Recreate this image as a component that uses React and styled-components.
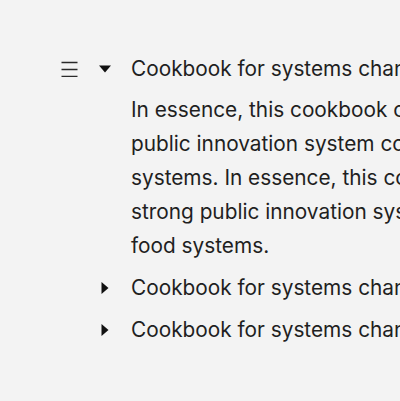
import React, { useState } from "react";
import styled, { createGlobalStyle } from "styled-components";

const GlobalStyle = createGlobalStyle`
  html, body {
    margin: 0;
    background: #f3f3f3;
    overflow: hidden;
  }
  body {
    font-family: "Inter", "Liberation Sans", sans-serif;
    color: #1f1f1f;
  }
`;

const Page = styled.div`
  display: flex;
  align-items: flex-start;
  gap: 15px;
  padding: 48px 0 0 60px;
  width: 900px;
`;

const Handle = styled.button`
  display: flex;
  align-items: center;
  justify-content: center;
  width: 18px;
  height: 42px;
  padding: 0;
  border: none;
  background: none;
  color: #2a2a2a;
  cursor: grab;
`;

const List = styled.div`
  display: flex;
  flex-direction: column;
  flex: 1;
`;

const Item = styled.div`
  display: flex;
  flex-direction: column;
`;

const Header = styled.button`
  display: flex;
  align-items: center;
  gap: 14px;
  padding: 4px 0;
  border: none;
  background: none;
  font: inherit;
  color: inherit;
  text-align: left;
  cursor: pointer;
`;

const Caret = styled.span`
  display: flex;
  align-items: center;
  justify-content: center;
  width: 24px;
  height: 34px;
  color: #111;
`;

const Title = styled.span`
  font-size: 20.8px;
  line-height: 34px;
  white-space: nowrap;
`;

const Body = styled.p`
  margin: 0;
  padding: 3px 0 4px 38px;
  width: 560px;
  font-size: 20.8px;
  line-height: 34px;
`;

const MenuIcon = () => (
  <svg width="17" height="16" viewBox="0 0 17 16">
    <path d="M0.5 1.5h16M0.5 8.5h16M0.5 15.5h16" stroke="currentColor" strokeWidth="1.4" fill="none" />
  </svg>
);

const CaretIcon = ({ open }) =>
  open ? (
    <svg width="12" height="8" viewBox="0 0 12 8">
      <path d="M0 0.5h12L6 7.5z" fill="currentColor" />
    </svg>
  ) : (
    <svg width="8" height="12" viewBox="0 0 8 12">
      <path d="M0.5 0v12L7.5 6z" fill="currentColor" />
    </svg>
  );

const text =
  "In essence, this cookbook offers a recipe for a strong public innovation system contributing to better food systems. In essence, this cookbook offers a path to a strong public innovation system that supports better food systems.";

const items = [
  { title: "Cookbook for systems change in food", body: text },
  { title: "Cookbook for systems change in food", body: text },
  { title: "Cookbook for systems change in food", body: text },
];

const App = () => {
  const [open, setOpen] = useState(0);
  return (
    <>
      <GlobalStyle />
      <Page>
        <Handle aria-label="Drag">
          <MenuIcon />
        </Handle>
        <List>
          {items.map((it, i) => (
            <Item key={i}>
              <Header onClick={() => setOpen(open === i ? -1 : i)}>
                <Caret>
                  <CaretIcon open={open === i} />
                </Caret>
                <Title>{it.title}</Title>
              </Header>
              {open === i && <Body>{it.body}</Body>}
            </Item>
          ))}
        </List>
      </Page>
    </>
  );
};

export default App;
